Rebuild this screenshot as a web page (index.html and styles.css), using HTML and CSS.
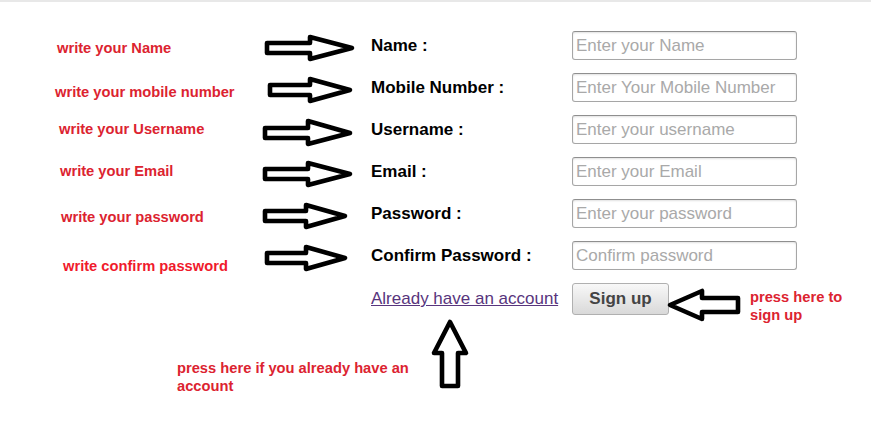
FILE: index.html
```html
<!DOCTYPE html>
<html>
<head>
<meta charset="utf-8">
<link rel="stylesheet" href="styles.css">
</head>
<body>
<div class="topline"></div>
<div class="page">
  <div class="form">
    <div class="note n1">write your Name</div>
    <div class="arrow a1"><svg width="96" height="30" viewBox="0 0 96 30"><polygon points="5,10 48,10 48,4 90,15 48,26 48,20 5,20"/></svg></div>
    <div class="label">Name :</div>
    <input class="field" type="text" placeholder="Enter your Name">

    <div class="note n2">write your mobile number</div>
    <div class="arrow a2"><svg width="96" height="30" viewBox="0 0 96 30"><polygon points="5,10 45,10 45,4 85,15 45,26 45,20 5,20"/></svg></div>
    <div class="label">Mobile Number :</div>
    <input class="field" type="text" placeholder="Enter Your Mobile Number">

    <div class="note n3">write your Username</div>
    <div class="arrow a3"><svg width="96" height="30" viewBox="0 0 96 30"><polygon points="3,11 46,11 46,4 88,16 46,27 46,21 3,21"/></svg></div>
    <div class="label">Username :</div>
    <input class="field" type="text" placeholder="Enter your username">

    <div class="note n4">write your Email</div>
    <div class="arrow a4"><svg width="96" height="30" viewBox="0 0 96 30"><polygon points="3,10 46,10 46,4 88,15 46,26 46,20 3,20"/></svg></div>
    <div class="label">Email :</div>
    <input class="field" type="email" placeholder="Enter your Email">

    <div class="note n5">write your password</div>
    <div class="arrow a5"><svg width="96" height="30" viewBox="0 0 96 30"><polygon points="3,10 44,10 44,4 83,15 44,26 44,20 3,20"/></svg></div>
    <div class="label">Password :</div>
    <input class="field" type="password" placeholder="Enter your password">

    <div class="note n6">write confirm password</div>
    <div class="arrow a6"><svg width="96" height="30" viewBox="0 0 96 30"><polygon points="5,10 44,10 44,4 83,15 44,26 44,20 5,20"/></svg></div>
    <div class="label">Confirm Password :</div>
    <input class="field" type="password" placeholder="Confirm password">

    <div class="spacer"></div>
    <div class="spacer"></div>
    <a class="link" href="#">Already have an account</a>
    <div class="actions">
      <button class="btn" type="button">Sign up</button>
      <svg class="left-arrow" width="76" height="38" viewBox="0 0 76 38"><polygon points="4,19 36,5 36,12 72,12 72,26 36,26 36,33"/></svg>
      <div class="note side">press here to<br>sign up</div>
    </div>
  </div>
  <div class="bottom">
    <div class="note lower">press here if you already have an account</div>
    <svg class="up-arrow" width="40" height="72" viewBox="0 0 40 72"><polygon points="20,4 36,35 28,35 28,68 12,68 12,35 4,35"/></svg>
  </div>
</div>
</body>
</html>
```

FILE: styles.css
```css
html, body {
  margin: 0;
  padding: 0;
  background: #ffffff;
}
body {
  font-family: "Liberation Sans", Arial, sans-serif;
  width: 871px;
  height: 442px;
  overflow: hidden;
}
.topline {
  height: 2px;
  background: #e8e8e8;
}
.page {
  padding-top: 29px;
}
.form {
  display: grid;
  grid-template-columns: 262px 109px 201px 1fr;
  grid-template-rows: repeat(6, 29px) 32px;
  row-gap: 13px;
}
.note {
  color: #dc2330;
  font-weight: bold;
  font-size: 14.7px;
  line-height: 18px;
  white-space: nowrap;
}
.form > .note {
  align-self: start;
}
.n1 { margin-top: 8px; padding-left: 57px; }
.n2 { margin-top: 10px; padding-left: 55px; }
.n3 { margin-top: 5px; padding-left: 59px; }
.n4 { margin-top: 5px; padding-left: 60px; }
.n5 { margin-top: 9px; padding-left: 61px; }
.n6 { margin-top: 16px; padding-left: 63px; color: #f01a2c; }
.arrow {
  align-self: start;
  margin-top: 2px;
}
.arrow svg, .left-arrow, .up-arrow {
  display: block;
}
.arrow polygon, .left-arrow polygon, .up-arrow polygon {
  fill: #ffffff;
  stroke: #000000;
  stroke-width: 4.6;
  stroke-linejoin: round;
}
.a1 { margin-left: 0; }
.a2 { margin-left: 3px; }
.a3 { margin-left: 0; }
.a4 { margin-left: 0; }
.a5 { margin-left: 0; }
.a6 { margin-left: 0; }
.label {
  align-self: center;
  font-weight: bold;
  font-size: 17px;
  color: #000;
}
.field {
  box-sizing: border-box;
  width: 225px;
  height: 29px;
  margin: 0;
  padding: 0 3px;
  border: 1px solid #a6a6a6;
  border-top-color: #8f8f8f;
  border-radius: 3px;
  box-shadow: inset 0 1px 2px rgba(0, 0, 0, 0.12);
  font-family: "Liberation Sans", Arial, sans-serif;
  font-size: 17px;
  color: #333;
  background: #fff;
}
.field::placeholder {
  color: #a9a9a9;
  opacity: 1;
}
.link {
  align-self: center;
  font-size: 17px;
  color: #58357d;
  text-decoration: underline;
}
.actions {
  display: flex;
  align-items: flex-start;
}
.btn {
  box-sizing: border-box;
  width: 97px;
  height: 32px;
  margin: 0;
  padding: 0;
  border: 1px solid #b0b0b0;
  border-radius: 3px;
  background: linear-gradient(#f8f8f8, #d9d9d9);
  font-family: "Liberation Sans", Arial, sans-serif;
  font-weight: bold;
  font-size: 17px;
  color: #444;
}
.left-arrow {
  margin-top: 3px;
  margin-left: -3px;
}
.note.side {
  margin-top: 5px;
  margin-left: 8px;
}
.bottom {
  display: flex;
  align-items: flex-start;
  padding-left: 177px;
  margin-top: 3px;
}
.note.lower {
  width: 253px;
  white-space: normal;
  margin-top: 41px;
}
```
